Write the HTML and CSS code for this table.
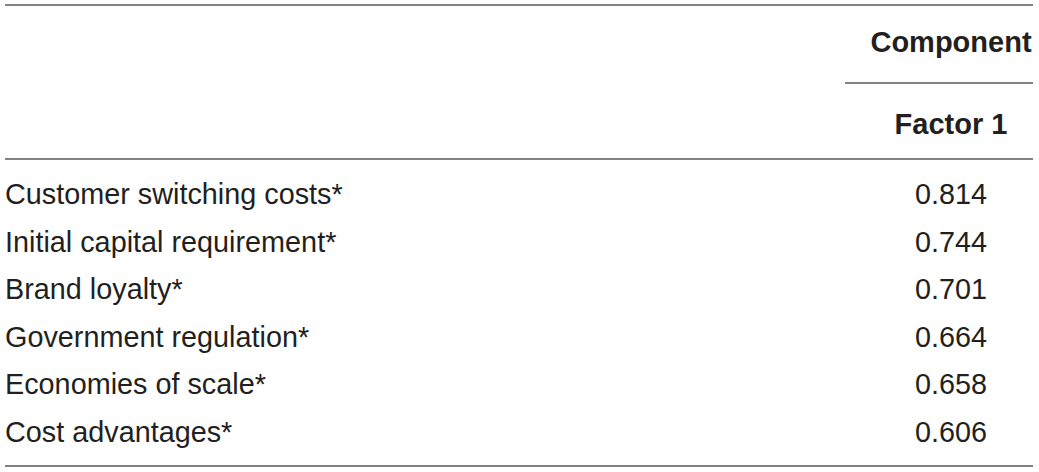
FILE: index.html
```html
<!DOCTYPE html>
<html>
<head>
<meta charset="utf-8">
<link rel="stylesheet" href="styles.css">
</head>
<body>
<div class="wrap">
<table class="tbl">
  <thead>
    <tr class="h1">
      <th class="lbl"></th>
      <th class="val comp">Component</th>
    </tr>
    <tr class="h2">
      <th class="lbl"></th>
      <th class="val">Factor 1</th>
    </tr>
  </thead>
  <tbody>
    <tr class="first"><td class="lbl">Customer switching costs*</td><td class="val">0.814</td></tr>
    <tr><td class="lbl">Initial capital requirement*</td><td class="val">0.744</td></tr>
    <tr><td class="lbl">Brand loyalty*</td><td class="val">0.701</td></tr>
    <tr><td class="lbl">Government regulation*</td><td class="val">0.664</td></tr>
    <tr><td class="lbl">Economies of scale*</td><td class="val">0.658</td></tr>
    <tr class="last"><td class="lbl">Cost advantages*</td><td class="val">0.606</td></tr>
  </tbody>
</table>
</div>
</body>
</html>
```
FILE: styles.css
```css
html, body {
  margin: 0;
  padding: 0;
  background: #ffffff;
}
.wrap {
  padding: 4px 6px 0 5px;
}
.tbl {
  width: 100%;
  border-collapse: collapse;
  font-family: "Liberation Sans", Arial, sans-serif;
  font-size: 28.8px;
  color: #231f20;
  border-top: 2px solid #828282;
  border-bottom: 2px solid #828282;
}
.tbl th, .tbl td {
  padding: 0;
  line-height: 32px;
}
.tbl th {
  font-weight: bold;
  font-size: 29px;
}
.lbl {
  text-align: left;
}
.val {
  width: 164px;
  padding-left: 24px !important;
  text-align: center;
}
.h1 th {
  padding-top: 20px;
  padding-bottom: 24px;
}
.h1 .comp {
  border-bottom: 2px solid #828282;
}
.h2 th {
  padding-top: 24px;
  padding-bottom: 18px;
  border-bottom: 2px solid #828282;
}
.tbl td {
  line-height: 47.5px;
}
.first td {
  padding-top: 11px;
}
.last td {
  padding-bottom: 9px;
}
```
